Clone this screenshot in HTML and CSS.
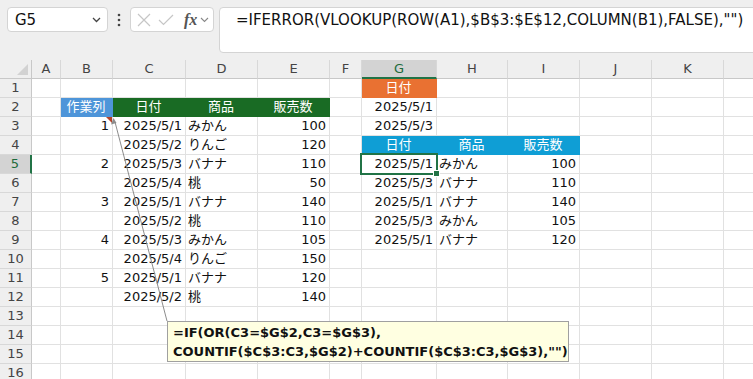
FILE: index.html
```html
<!DOCTYPE html>
<html lang="ja">
<head>
    <meta charset="UTF-8">
    <title>作業列で抽出</title>
    <link rel="stylesheet" href="styles.css">
</head>
<body>
    <div class="toolbar">
        <div class="namebox">
            <span>G5</span>
            <svg width="9" height="6" viewBox="0 0 9 6"><path d="M1 1l3.5 3.5L8 1" fill="none" stroke="#444" stroke-width="1.3"/></svg>
        </div>
        <div class="dots">
            <svg width="4" height="14" viewBox="0 0 4 14"><circle cx="2" cy="2" r="1.3" fill="#444"/><circle cx="2" cy="7" r="1.3" fill="#444"/><circle cx="2" cy="12" r="1.3" fill="#444"/></svg>
        </div>
        <div class="fxbox">
            <svg width="14" height="14" viewBox="0 0 14 14"><path d="M1 1l12 12M13 1L1 13" stroke="#c6c6c6" stroke-width="1.2"/></svg>
            <svg width="16" height="12" viewBox="0 0 16 12"><path d="M1 6l4.5 4.5L15 1" fill="none" stroke="#c6c6c6" stroke-width="1.2"/></svg>
            <span class="fx">fx</span>
            <svg width="9" height="6" viewBox="0 0 9 6"><path d="M1 1l3.5 3.5L8 1" fill="none" stroke="#888" stroke-width="1.1"/></svg>
        </div>
        <div class="formula">=IFERROR(VLOOKUP(ROW(A1),$B$3:$E$12,COLUMN(B1),FALSE),"")</div>
    </div>

    <div class="sheet">
        <!-- 列見出し -->
        <div class="corner"><span class="tri"></span></div>
        <div class="ch">A</div><div class="ch">B</div><div class="ch">C</div><div class="ch">D</div><div class="ch">E</div><div class="ch">F</div><div class="ch sel">G</div><div class="ch">H</div><div class="ch">I</div><div class="ch">J</div><div class="ch">K</div><div class="ch"></div>

        <div class="rh">1</div>
        <div class="c"></div><div class="c"></div><div class="c"></div><div class="c"></div><div class="c"></div><div class="c"></div><div class="c hd orange">日付</div><div class="c"></div><div class="c"></div><div class="c"></div><div class="c"></div><div class="c"></div>

        <div class="rh">2</div>
        <div class="c"></div><div class="c hd blue">作業列</div><div class="c hd green">日付</div><div class="c hd green">商品</div><div class="c hd green">販売数</div><div class="c"></div><div class="c num">2025/5/1</div><div class="c"></div><div class="c"></div><div class="c"></div><div class="c"></div><div class="c"></div>

        <div class="rh">3</div>
        <div class="c"></div><div class="c num note">1</div><div class="c num">2025/5/1</div><div class="c">みかん</div><div class="c num">100</div><div class="c"></div><div class="c num">2025/5/3</div><div class="c"></div><div class="c"></div><div class="c"></div><div class="c"></div><div class="c"></div>

        <div class="rh">4</div>
        <div class="c"></div><div class="c"></div><div class="c num">2025/5/2</div><div class="c">りんご</div><div class="c num">120</div><div class="c"></div><div class="c hd sky">日付</div><div class="c hd sky">商品</div><div class="c hd sky">販売数</div><div class="c"></div><div class="c"></div><div class="c"></div>

        <div class="rh sel">5</div>
        <div class="c"></div><div class="c num">2</div><div class="c num">2025/5/3</div><div class="c">バナナ</div><div class="c num">110</div><div class="c"></div><div class="c num active">2025/5/1</div><div class="c">みかん</div><div class="c num">100</div><div class="c"></div><div class="c"></div><div class="c"></div>

        <div class="rh">6</div>
        <div class="c"></div><div class="c"></div><div class="c num">2025/5/4</div><div class="c">桃</div><div class="c num">50</div><div class="c"></div><div class="c num">2025/5/3</div><div class="c">バナナ</div><div class="c num">110</div><div class="c"></div><div class="c"></div><div class="c"></div>

        <div class="rh">7</div>
        <div class="c"></div><div class="c num">3</div><div class="c num">2025/5/1</div><div class="c">バナナ</div><div class="c num">140</div><div class="c"></div><div class="c num">2025/5/1</div><div class="c">バナナ</div><div class="c num">140</div><div class="c"></div><div class="c"></div><div class="c"></div>

        <div class="rh">8</div>
        <div class="c"></div><div class="c"></div><div class="c num">2025/5/2</div><div class="c">桃</div><div class="c num">110</div><div class="c"></div><div class="c num">2025/5/3</div><div class="c">みかん</div><div class="c num">105</div><div class="c"></div><div class="c"></div><div class="c"></div>

        <div class="rh">9</div>
        <div class="c"></div><div class="c num">4</div><div class="c num">2025/5/3</div><div class="c">みかん</div><div class="c num">105</div><div class="c"></div><div class="c num">2025/5/1</div><div class="c">バナナ</div><div class="c num">120</div><div class="c"></div><div class="c"></div><div class="c"></div>

        <div class="rh">10</div>
        <div class="c"></div><div class="c"></div><div class="c num">2025/5/4</div><div class="c">りんご</div><div class="c num">150</div><div class="c"></div><div class="c"></div><div class="c"></div><div class="c"></div><div class="c"></div><div class="c"></div><div class="c"></div>

        <div class="rh">11</div>
        <div class="c"></div><div class="c num">5</div><div class="c num">2025/5/1</div><div class="c">バナナ</div><div class="c num">120</div><div class="c"></div><div class="c"></div><div class="c"></div><div class="c"></div><div class="c"></div><div class="c"></div><div class="c"></div>

        <div class="rh">12</div>
        <div class="c"></div><div class="c"></div><div class="c num">2025/5/2</div><div class="c">桃</div><div class="c num">140</div><div class="c"></div><div class="c"></div><div class="c"></div><div class="c"></div><div class="c"></div><div class="c"></div><div class="c"></div>

        <div class="rh">13</div>
        <div class="c"></div><div class="c"></div><div class="c"></div><div class="c"></div><div class="c"></div><div class="c"></div><div class="c"></div><div class="c"></div><div class="c"></div><div class="c"></div><div class="c"></div><div class="c"></div>

        <div class="rh">14</div>
        <div class="c"></div><div class="c"></div><div class="c"></div><div class="c"></div><div class="c"></div><div class="c"></div><div class="c"></div><div class="c"></div><div class="c"></div><div class="c"></div><div class="c"></div><div class="c"></div>

        <div class="rh">15</div>
        <div class="c"></div><div class="c"></div><div class="c"></div><div class="c"></div><div class="c"></div><div class="c"></div><div class="c"></div><div class="c"></div><div class="c"></div><div class="c"></div><div class="c"></div><div class="c"></div>

        <div class="rh">16</div>
        <div class="c"></div><div class="c"></div><div class="c"></div><div class="c"></div><div class="c"></div><div class="c"></div><div class="c"></div><div class="c"></div><div class="c"></div><div class="c"></div><div class="c"></div><div class="c"></div>
    </div>

    <!-- コメントの矢印と吹き出し -->
    <svg class="arrow" width="753" height="379" viewBox="0 0 753 379">
        <line x1="167" y1="321" x2="115" y2="122" stroke="#8c8c8c" stroke-width="1"/>
        <path d="M113.5 118l-2.5 6.5l5.5-1.5z" fill="#8c8c8c"/>
    </svg>
    <div class="comment">=IF(OR(C3=$G$2,C3=$G$3),<br>COUNTIF($C$3:C3,$G$2)+COUNTIF($C$3:C3,$G$3),"")</div>
</body>
</html>
```

FILE: styles.css
```css
body {
    margin: 0;
    background-color: #efefef;
    font-family: "DejaVu Sans", "Noto Sans CJK JP", sans-serif;
    color: #111;
    width: 753px;
    height: 379px;
    overflow: hidden;
    position: relative;
}
.toolbar {
    display: flex;
    align-items: flex-start;
    height: 60px;
    box-sizing: border-box;
    padding: 7px 0 0 7px;
}
.namebox {
    width: 101px;
    height: 25px;
    box-sizing: border-box;
    background-color: #fff;
    border: 1px solid #d4d4d4;
    border-radius: 4px;
    display: flex;
    align-items: center;
    justify-content: space-between;
    padding: 0 6px 0 7px;
    font-size: 15px;
}
.dots {
    width: 22px;
    height: 25px;
    display: flex;
    align-items: center;
    justify-content: center;
}
.fxbox {
    width: 84px;
    height: 25px;
    box-sizing: border-box;
    background-color: #fff;
    border: 1px solid #d4d4d4;
    border-radius: 4px;
    display: flex;
    align-items: center;
    gap: 7px;
    padding: 0 3px 0 6px;
}
.fx {
    font-family: "Liberation Serif", serif;
    font-style: italic;
    font-weight: bold;
    font-size: 16px;
    color: #555;
    margin-left: 3px;
    margin-right: -4px;
}
.formula {
    flex: 1;
    margin-left: 5px;
    margin-right: -8px;
    height: 46px;
    box-sizing: border-box;
    background-color: #fff;
    border: 1px solid #d4d4d4;
    border-radius: 4px;
    padding: 2px 0 0 16px;
    font-size: 15px;
    line-height: 20px;
    white-space: nowrap;
}
.sheet {
    display: grid;
    grid-template-columns: 32px 29px 52px 73px 72px 72px 32px 75px 71px 72px 72px 72px 40px;
    grid-auto-rows: 19px;
    background-color: #fff;
    font-size: 13px;
}
.corner,
.ch,
.rh {
    background-color: #efefef;
    color: #444;
    box-sizing: border-box;
    text-align: center;
    line-height: 18px;
}
.corner {
    position: relative;
    border-right: 1px solid #c8c8c8;
    border-bottom: 1px solid #c8c8c8;
}
.tri {
    position: absolute;
    right: 3px;
    bottom: 3px;
    border-left: 11px solid transparent;
    border-bottom: 11px solid #d2d2d2;
}
.ch {
    border-right: 1px solid #d8d8d8;
    border-bottom: 1px solid #c8c8c8;
}
.rh {
    border-right: 1px solid #c8c8c8;
    border-bottom: 1px solid #d8d8d8;
}
.ch.sel {
    background-color: #d3d3d3;
    color: #1d6b3c;
    border-bottom: 2px solid #217346;
}
.rh.sel {
    background-color: #d3d3d3;
    color: #1d6b3c;
    border-right: 2px solid #217346;
}
.c {
    box-sizing: border-box;
    border-right: 1px solid #e1e1e1;
    border-bottom: 1px solid #e1e1e1;
    padding: 0 3px 0 2px;
    line-height: 18px;
    white-space: nowrap;
    overflow: visible;
}
.num {
    text-align: right;
}
.hd {
    color: #fff;
    text-align: center;
}
.blue {
    background-color: #4e95d9;
    border-color: #4e95d9;
}
.green {
    background-color: #196b24;
    border-color: #196b24;
}
.orange {
    background-color: #e97132;
    border-color: #e97132;
}
.sky {
    background-color: #0f9ed5;
    border-color: #0f9ed5;
}
.note {
    position: relative;
}
.note::after {
    content: "";
    position: absolute;
    right: 0;
    top: 0;
    border-left: 6px solid transparent;
    border-top: 6px solid #b5432a;
}
.active {
    position: relative;
}
.active::after {
    content: "";
    position: absolute;
    left: -2px;
    top: -2px;
    right: -2px;
    bottom: -2px;
    border: 2px solid #217346;
}
.active::before {
    content: "";
    position: absolute;
    right: -4px;
    bottom: -4px;
    width: 5px;
    height: 5px;
    background-color: #217346;
    border: 1px solid #fff;
    z-index: 1;
}
.arrow {
    position: absolute;
    left: 0;
    top: 0;
    pointer-events: none;
}
.comment {
    position: absolute;
    left: 167px;
    top: 321px;
    width: 402px;
    height: 41px;
    box-sizing: border-box;
    background-color: #ffffe1;
    border: 1px solid #a0a0a0;
    padding: 1px 0 0 5px;
    font-size: 13px;
    font-weight: bold;
    line-height: 19px;
    white-space: nowrap;
}
```
